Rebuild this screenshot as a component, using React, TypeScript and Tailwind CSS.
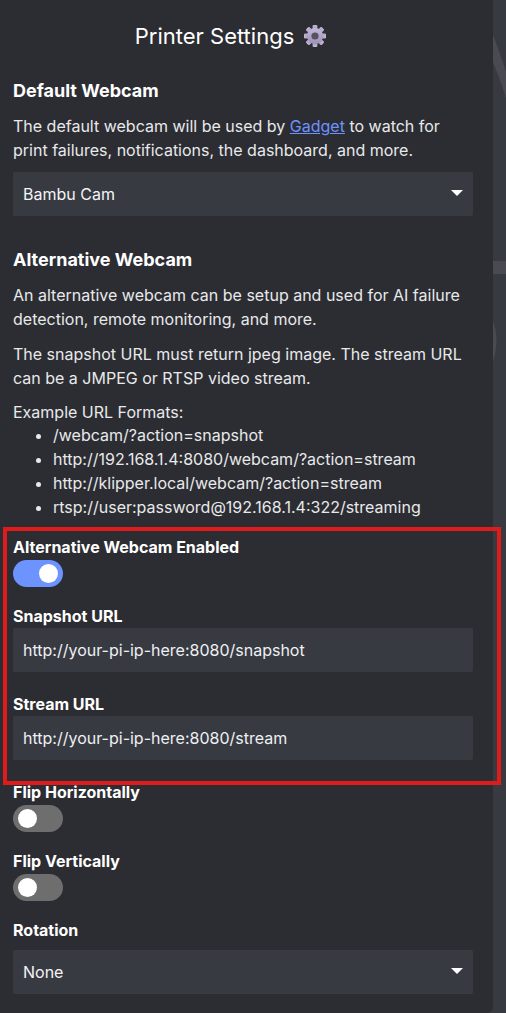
import { ReactNode } from "react";

function Gear() {
  const teeth = [0, 45, 90, 135, 180, 225, 270, 315];
  return (
    <svg viewBox="0 0 24 24" className="w-[24px] h-[24px]">
      <defs>
        <linearGradient id="gear" x1="0" y1="0" x2="0" y2="1">
          <stop offset="0" stopColor="#c4b8da" />
          <stop offset="1" stopColor="#9c90b4" />
        </linearGradient>
      </defs>
      {teeth.map((a) => (
        <rect key={a} x="9.6" y="1" width="4.8" height="6" rx="1.2" fill="url(#gear)" transform={`rotate(${a} 12 12)`} />
      ))}
      <circle cx="12" cy="12" r="8" fill="url(#gear)" />
      <circle cx="12" cy="12" r="3.6" fill="#55535f" />
    </svg>
  );
}

function Caret() {
  return (
    <svg viewBox="0 0 12 6" className="w-[12px] h-[6px] absolute right-[10px] top-[18px]">
      <path d="M0 0 L12 0 L6 6 Z" fill="#ffffff" />
    </svg>
  );
}

function SelectBox({ children }: { children: ReactNode }) {
  return (
    <div className="relative h-[44px] rounded-[2px] bg-[#383a42] px-[10px] flex items-center text-[16px] text-[#f4f4f5]">
      {children}
      <Caret />
    </div>
  );
}

function TextBox({ children }: { children: ReactNode }) {
  return (
    <div className="h-[44px] rounded-[2px] bg-[#383a42] px-[10px] flex items-center text-[16px] text-[#eef0f2]">
      {children}
    </div>
  );
}

function Toggle({ on }: { on?: boolean }) {
  return (
    <div className={`w-[50px] h-[27px] rounded-full flex items-center px-[5px] ${on ? "bg-[#6d93ff] justify-end" : "bg-[#6e6e6e] justify-start"}`}>
      <div className="w-[19px] h-[19px] rounded-full bg-white" />
    </div>
  );
}

function Label({ children }: { children: ReactNode }) {
  return <div className="text-[16px] leading-[20px] font-bold text-white">{children}</div>;
}

export default function App() {
  return (
    <div className="relative w-[506px] h-[1013px] overflow-hidden bg-[#383a42] font-['Inter',sans-serif]">
      {/* background swooshes behind the panel */}
      <svg viewBox="0 0 13 400" className="absolute right-0 top-0 w-[13px] h-[400px]">
        <path d="M0 35 C5 48 10 62 13 72 L13 98 C8 82 4 72 0 62 Z" fill="#4a4a52" />
        <rect x="0" y="261" width="13" height="13" fill="#4a4a52" />
        <path d="M0 322 C4 330 5 345 0 362 Z" fill="#4a4a52" />
      </svg>

      <div className="w-[493px] h-[1013px] rounded-br-[6px] bg-[#2c2d32] pl-[13px] pr-[20px] text-[16px] leading-[24px] text-[#e8e9eb]">
        <div className="h-[72px] pr-[24px] flex items-center justify-center gap-[9px] text-[22px] text-white">
          Printer Settings
          <Gear />
        </div>

        <h2 className="text-[18px] leading-[28px] h-[28px] mt-[5px] font-bold text-white">Default Webcam</h2>
        <p className="mt-[9px]">
          The default webcam will be used by <span className="text-[#6d93ff] underline">Gadget</span> to watch for print failures, notifications, the dashboard, and more.
        </p>
        <div className="mt-[10px]">
          <SelectBox>Bambu Cam</SelectBox>
        </div>

        <h2 className="text-[18px] leading-[28px] h-[28px] mt-[30px] font-bold text-white">Alternative Webcam</h2>
        <p className="mt-[9px]">An alternative webcam can be setup and used for AI failure detection, remote monitoring, and more.</p>
        <p className="mt-[11px]">The snapshot URL must return jpeg image. The stream URL can be a JMPEG or RTSP video stream.</p>
        <p className="mt-[10px]">Example URL Formats:</p>
        <ul className="list-disc pl-[40px] -mt-[1px]">
          <li>/webcam/?action=snapshot</li>
          <li>http://192.168.1.4:8080/webcam/?action=stream</li>
          <li>http://klipper.local/webcam/?action=stream</li>
          <li>rtsp://user:password@192.168.1.4:322/streaming</li>
        </ul>

        <div className="mt-[18px]"><Label>Alternative Webcam Enabled</Label></div>
        <div className="mt-[3px]"><Toggle on /></div>
        <div className="mt-[19px]"><Label>Snapshot URL</Label></div>
        <div className="mt-[2px]"><TextBox>http://your-pi-ip-here:8080/snapshot</TextBox></div>
        <div className="mt-[22px]"><Label>Stream URL</Label></div>
        <div className="mt-[2px]"><TextBox>http://your-pi-ip-here:8080/stream</TextBox></div>
        <div className="mt-[22px]"><Label>Flip Horizontally</Label></div>
        <div className="mt-[3px]"><Toggle /></div>
        <div className="mt-[19px]"><Label>Flip Vertically</Label></div>
        <div className="mt-[3px]"><Toggle /></div>
        <div className="mt-[19px]"><Label>Rotation</Label></div>
        <div className="mt-[10px]"><SelectBox>None</SelectBox></div>
      </div>

      {/* red annotation box drawn over the screenshot */}
      <div className="absolute left-[3px] top-[527px] w-[498px] h-[258px] border-[4px] border-[#e01b1b]" />
    </div>
  );
}
